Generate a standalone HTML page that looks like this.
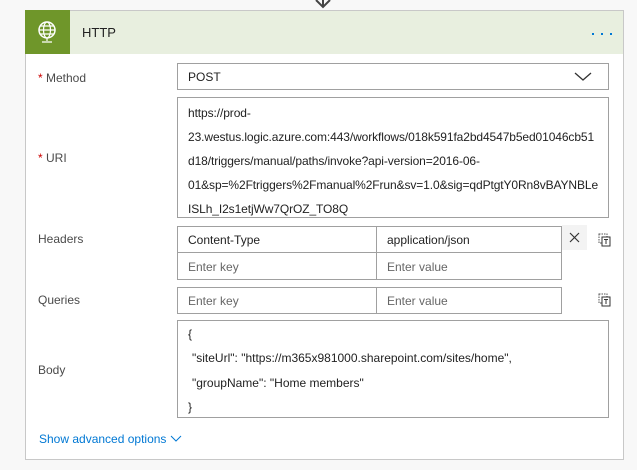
<!DOCTYPE html>
<html><head><style>
body{margin:0;width:637px;height:470px;background:#f8f8f8;font-family:"Liberation Sans",sans-serif;font-size:12px;color:#222;position:relative;overflow:hidden}
.a{position:absolute}
.card{left:25px;top:10px;width:599px;height:450px;background:#fff;border:1px solid #c8c8c8;box-sizing:border-box}
.hdr{left:26px;top:11px;width:597px;height:43px;background:#e8efdf}
.ico{left:25px;top:10px;width:45px;height:44px;background:#6f962a}
.lbl{color:#4a4a4a;font-size:12px}
.box{border:1px solid #a0a0a0;box-sizing:border-box;background:#fff}
.ph{color:#666}
.ln{position:absolute;left:10px;white-space:nowrap}
.u .ln{letter-spacing:-0.1px}
</style></head><body>
<svg class="a" style="left:313px;top:0" width="20" height="10"><path d="M3 0 L10 7 L17 0 M10 7 V0" stroke="#444" stroke-width="2" fill="none"/></svg>
<div class="a card"></div>
<div class="a hdr"></div>
<div class="a ico"><svg width="45" height="44"><circle cx="22" cy="20" r="8" stroke="#fff" stroke-width="1.5" fill="none"/><ellipse cx="22" cy="20" rx="3.5" ry="8" stroke="#fff" stroke-width="1.2" fill="none"/><path d="M14 20H30M15.5 16H28.5M15.5 24H28.5M22 28V31M17 32H27" stroke="#fff" stroke-width="1.2"/></svg></div>
<div class="a" style="left:82px;top:25px;font-size:13px">HTTP</div>
<svg class="a" style="left:591px;top:32px" width="22" height="4"><rect x="1" y="1" width="2" height="2" fill="#0078d4"/><rect x="10" y="1" width="2" height="2" fill="#0078d4"/><rect x="19" y="1" width="2" height="2" fill="#0078d4"/></svg>

<div class="a lbl" style="left:38px;top:71px"><span style="color:#c00">*</span> Method</div>
<div class="a box" style="left:177px;top:63px;width:432px;height:27px"><span class="ln" style="top:6px">POST</span>
<svg class="a" style="left:396px;top:8px" width="18" height="10"><path d="M1 1L9 8L17 1" stroke="#333" stroke-width="1.3" fill="none"/></svg></div>

<div class="a lbl" style="left:38px;top:151px"><span style="color:#c00">*</span> URI</div>
<div class="a box u" style="left:177px;top:97px;width:432px;height:121px">
<span class="ln" style="top:8px">https://prod-</span>
<span class="ln" style="top:32px">23.westus.logic.azure.com:443/workflows/018k591fa2bd4547b5ed01046cb51</span>
<span class="ln" style="top:56px">d18/triggers/manual/paths/invoke?api-version=2016-06-</span>
<span class="ln" style="top:80px">01&amp;sp=%2Ftriggers%2Fmanual%2Frun&amp;sv=1.0&amp;sig=qdPtgtY0Rn8vBAYNBLe</span>
<span class="ln" style="top:104px">ISLh_I2s1etjWw7QrOZ_TO8Q</span></div>

<div class="a lbl" style="left:38px;top:232px">Headers</div>
<div class="a box" style="left:177px;top:226px;width:200px;height:27px"><span class="ln" style="top:6px">Content-Type</span></div>
<div class="a box" style="left:376px;top:226px;width:186px;height:27px"><span class="ln" style="top:6px">application/json</span></div>
<div class="a box" style="left:177px;top:252px;width:200px;height:28px"><span class="ln ph" style="top:7px">Enter key</span></div>
<div class="a box" style="left:376px;top:252px;width:186px;height:28px"><span class="ln ph" style="top:7px">Enter value</span></div>
<div class="a" style="left:562px;top:225px;width:25px;height:25px;background:#f3f3f3"><svg width="25" height="25"><path d="M8 8L17 17M17 8L8 17" stroke="#333" stroke-width="1.2"/></svg></div>

<div class="a lbl" style="left:38px;top:293px">Queries</div>
<div class="a box" style="left:177px;top:287px;width:200px;height:27px"><span class="ln ph" style="top:6px">Enter key</span></div>
<div class="a box" style="left:376px;top:287px;width:186px;height:27px"><span class="ln ph" style="top:6px">Enter value</span></div>

<svg class="a" style="left:597px;top:232px" width="16" height="16"><rect x="2" y="2" width="8" height="9" stroke="#555" stroke-dasharray="1.5 1" fill="none"/><rect x="5" y="5" width="8" height="9" stroke="#333" fill="#fff"/><path d="M7 7.5H11M9 7.5V12" stroke="#333"/></svg>
<svg class="a" style="left:597px;top:292px" width="16" height="16"><rect x="2" y="2" width="8" height="9" stroke="#555" stroke-dasharray="1.5 1" fill="none"/><rect x="5" y="5" width="8" height="9" stroke="#333" fill="#fff"/><path d="M7 7.5H11M9 7.5V12" stroke="#333"/></svg>

<div class="a lbl" style="left:38px;top:363px">Body</div>
<div class="a box" style="left:177px;top:320px;width:432px;height:98px">
<span class="ln" style="top:6px">{</span>
<span class="ln" style="top:30px;left:14px">"siteUrl": "https://m365x981000.sharepoint.com/sites/home",</span>
<span class="ln" style="top:55px;left:14px">"groupName": "Home members"</span>
<span class="ln" style="top:79px">}</span></div>

<div class="a" style="left:39px;top:432px;color:#0078d4">Show advanced options <svg width="12" height="8"><path d="M1 1L6 6L11 1" stroke="#0078d4" fill="none"/></svg></div>
</body></html>
